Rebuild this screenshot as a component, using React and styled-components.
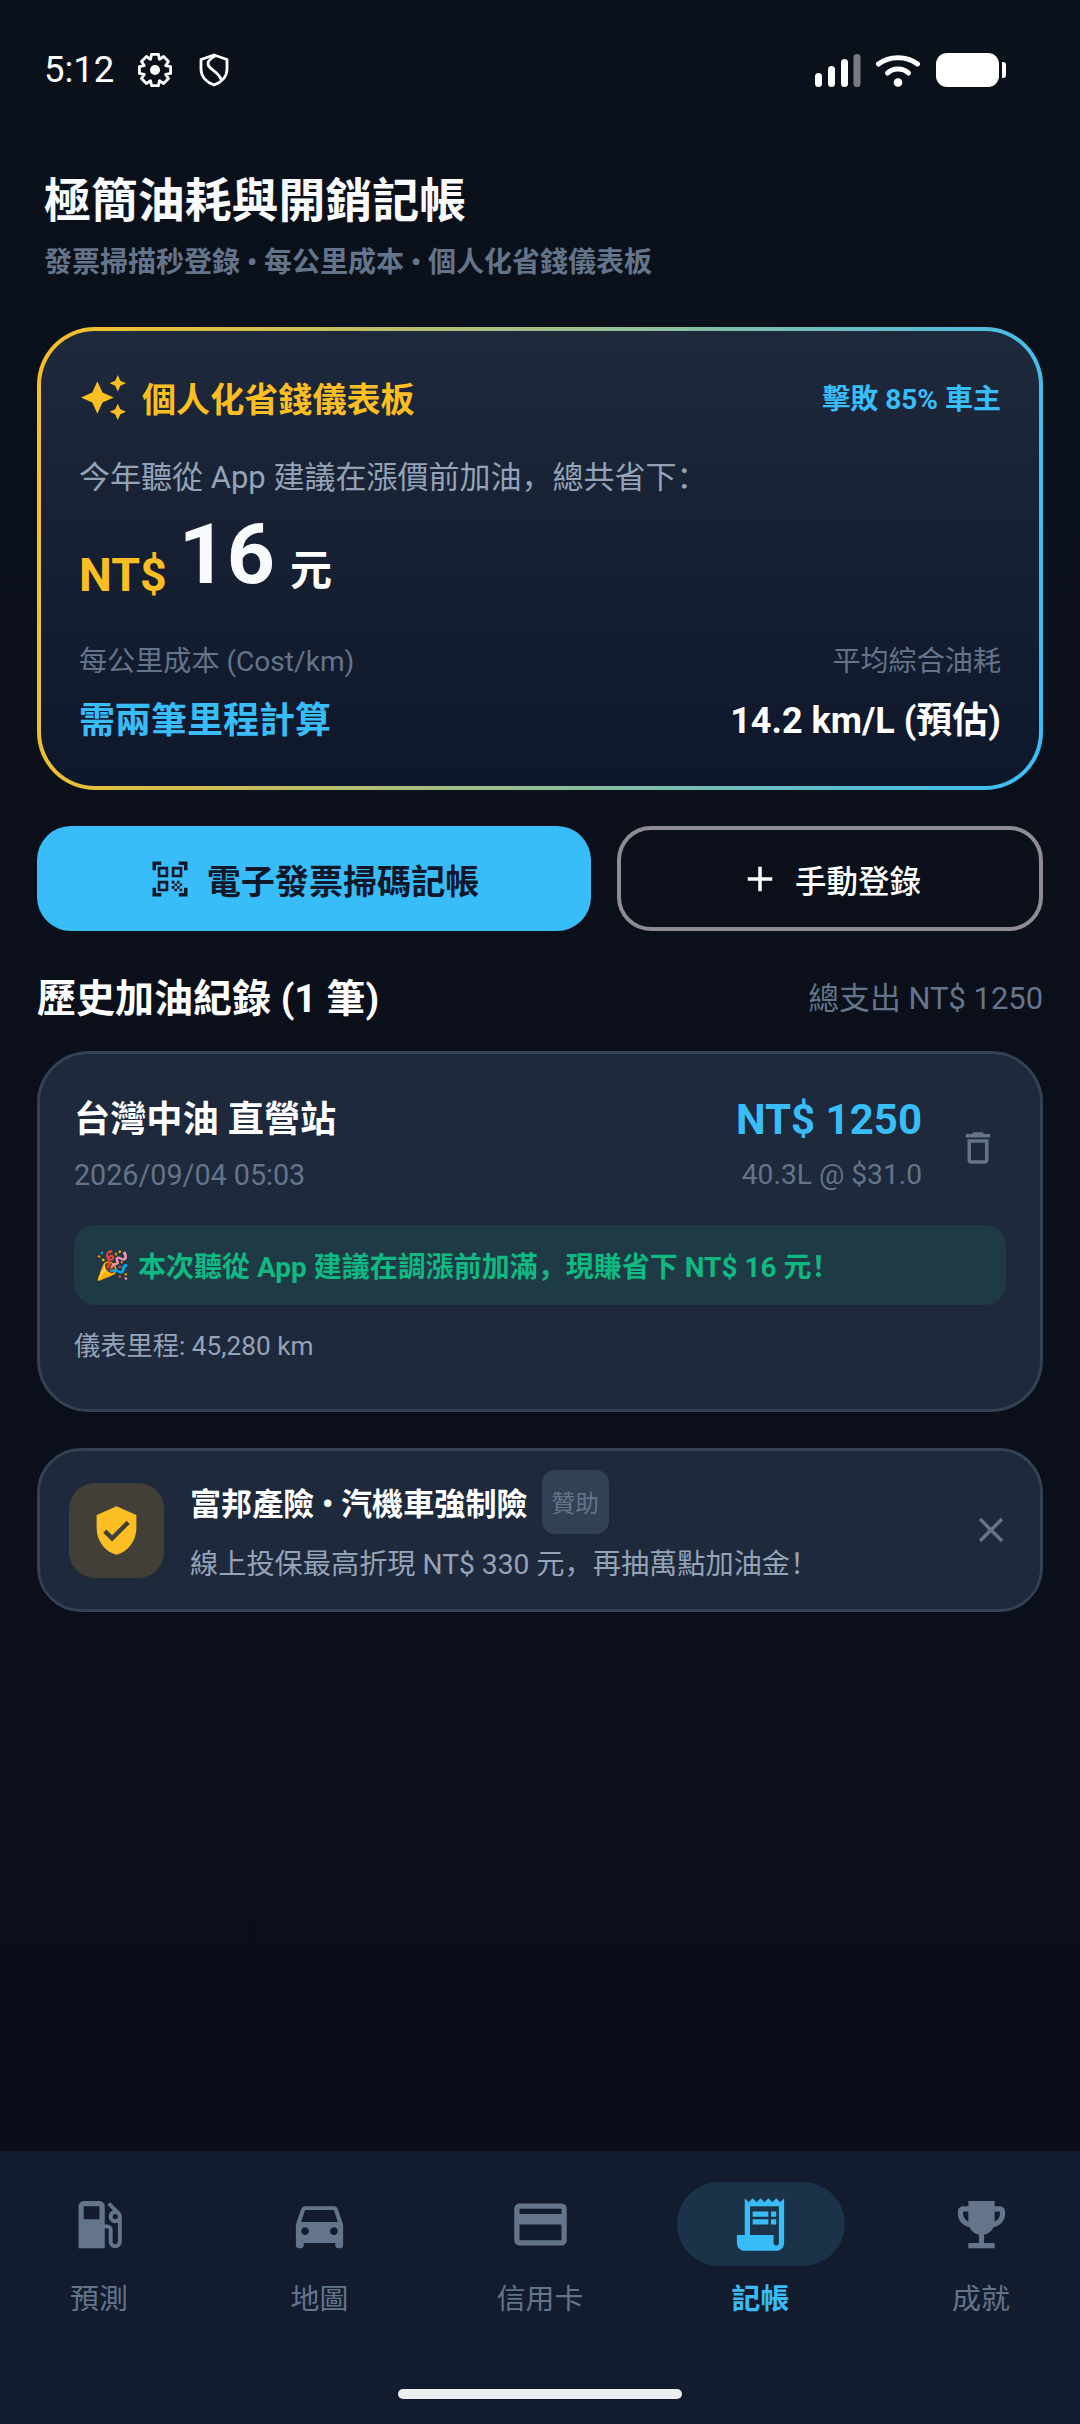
import React from 'react';
import styled, { createGlobalStyle } from 'styled-components';
import {
  MdAdd, MdAutoAwesome, MdClose, MdCreditCard, MdDeleteOutline, MdDirectionsCar,
  MdEmojiEvents, MdQrCodeScanner, MdReceiptLong, MdVerifiedUser,
} from 'react-icons/md';

const Global = createGlobalStyle`
  html, body { margin: 0; padding: 0; background: #0b1019; }
  * { box-sizing: border-box; }
  body { font-family: Roboto, "Noto Sans CJK SC", "Noto Sans CJK TC", sans-serif; }
`;

const Screen = styled.div`
  width: 1080px;
  height: 2424px;
  display: flex;
  flex-direction: column;
  background: linear-gradient(#0b111b, #0a0e18);
  color: #fff;
  overflow: hidden;
`;
const StatusBar = styled.div`
  height: 140px;
  flex: none;
  display: flex;
  align-items: center;
  padding: 0 81px 0 44px;
`;
const Time = styled.span`
  font-size: 36.5px;
  line-height: 1;
  width: 94px;
`;
const StatusRight = styled.div`
  margin-left: auto;
  display: flex;
  align-items: center;
`;
const Battery = styled.span`
  display: block;
  width: 63px;
  height: 34px;
  margin-left: 16px;
  border-radius: 11px;
  background: #fff;
  position: relative;
  &::after {
    content: "";
    position: absolute;
    right: -7px;
    top: 9px;
    width: 4px;
    height: 16px;
    border-radius: 0 3px 3px 0;
    background: #fff;
  }
`;
const Header = styled.header`
  padding: 31px 44px 0;
  height: 187px;
  flex: none;
`;
const Title = styled.h1`
  margin: 0;
  font-size: 46.9px;
  line-height: 60px;
  font-weight: 700;
  color: #f8fafc;
`;
const Sub = styled.p`
  margin: 12px 0 0;
  font-size: 28px;
  line-height: 40px;
  font-weight: 700;
  color: #64748b;
`;
const Main = styled.main`
  flex: 1;
  padding: 0 37px;
  display: flex;
  flex-direction: column;
`;
const Dash = styled.section`
  height: 463px;
  border: 4px solid transparent;
  border-radius: 58px;
  background:
    linear-gradient(#1e293b, #0f172a) padding-box,
    linear-gradient(100deg, #fbbf24, #38bdf8) border-box;
  padding: 30px 38px 0;
`;
const SpaceRow = styled.div`
  display: flex;
  justify-content: space-between;
  align-items: center;
`;
const DashHead = styled(SpaceRow)`
  height: 52px;
  margin-top: 10px;
`;
const DashTitle = styled.div`
  display: flex;
  align-items: center;
  gap: 14px;
  color: #fbbf24;
  font-size: 34.1px;
  font-weight: 700;
`;
const Beat = styled.span`
  color: #38bdf8;
  font-size: 28px;
  font-weight: 700;
`;
const Lead = styled.p`
  margin: 33px 0 0;
  font-size: 31px;
  line-height: 44px;
  color: #94a3b8;
`;
const SavedRow = styled.div`
  display: flex;
  align-items: flex-end;
  height: 100px;
  margin-top: 5px;
`;
const Currency = styled.span`
  color: #fbbf24;
  font-size: 46.5px;
  font-weight: 700;
  line-height: 56px;
  margin-bottom: 2px;
`;
const Amount = styled.span`
  font-size: 84px;
  line-height: 100px;
  font-weight: 700;
  margin: 0 15px 0 12px;
  color: #f8fafc;
`;
const Unit = styled.span`
  font-size: 42px;
  line-height: 56px;
  font-weight: 700;
  margin-bottom: 6px;
`;
const StatLabels = styled(SpaceRow)`
  margin-top: 37px;
  font-size: 28.1px;
  line-height: 40px;
  color: #64748b;
`;
const StatValues = styled(SpaceRow)`
  margin-top: 14px;
  font-size: 36px;
  line-height: 50px;
  font-weight: 700;
`;
const CostNote = styled.span`
  color: #38bdf8;
`;
const Actions = styled.div`
  display: flex;
  gap: 26px;
  margin-top: 36px;
`;
const Btn = styled.button`
  height: 105px;
  border-radius: 34px;
  display: flex;
  align-items: center;
  justify-content: center;
  font-family: inherit;
  padding: 0;
  border: ${p => (p.$primary ? 'none' : '4px solid #8f8b93')};
  background: ${p => (p.$primary ? '#38bdf8' : 'transparent')};
  color: ${p => (p.$primary ? '#0f172a' : '#fff')};
  flex: ${p => (p.$primary ? '0 0 554px' : '1')};
  gap: ${p => (p.$primary ? '16px' : '14px')};
  font-size: ${p => (p.$primary ? '34.1px' : '31.5px')};
  font-weight: ${p => (p.$primary ? 700 : 500)};
`;
const SectionHead = styled(SpaceRow)`
  margin-top: 37px;
  height: 54px;
`;
const SectionTitle = styled.h2`
  margin: 0;
  font-size: 39px;
  font-weight: 700;
`;
const Total = styled.span`
  font-size: 30.9px;
  color: #64748b;
`;
const Panel = styled.section`
  background: #1e293b;
  border: 3px solid #334155;
`;
const Record = styled(Panel)`
  margin-top: 29px;
  height: 361px;
  border-radius: 52px;
  padding: 41px 34px 0;
`;
const RecordTop = styled.div`
  display: flex;
  align-items: center;
  justify-content: space-between;
`;
const RecordMain = styled.div`
  flex: 1;
  display: grid;
  grid-template-columns: 1fr auto;
  row-gap: 10px;
  align-items: center;
`;
const Station = styled.div`
  font-size: 36.2px;
  line-height: 50px;
  font-weight: 700;
`;
const Price = styled.div`
  font-size: 42px;
  line-height: 50px;
  font-weight: 700;
  color: #38bdf8;
  text-align: right;
`;
const Meta = styled.div`
  font-size: ${p => (p.$right ? '28.2px' : '28.7px')};
  line-height: 40px;
  color: #64748b;
  text-align: ${p => (p.$right ? 'right' : 'left')};
`;
const Trash = styled.span`
  display: flex;
  width: 42px;
  margin: 5px 7px 0 35px;
  color: #64748b;
`;
const Savings = styled.div`
  margin-top: 30px;
  height: 80px;
  border-radius: 21px;
  background: #1e3a45;
  color: #10b981;
  display: flex;
  align-items: center;
  padding: 0 21px;
  gap: 8px;
  font-size: 28px;
  font-weight: 700;
`;
const Odometer = styled.div`
  margin-top: 23px;
  font-size: 26.25px;
  line-height: 36px;
  color: #94a3b8;
`;
const Promo = styled(Panel)`
  margin-top: 36px;
  height: 164px;
  border-radius: 44px;
  display: flex;
  align-items: center;
  padding: 0 28px 0 29px;
`;
const PromoIcon = styled.div`
  width: 95px;
  height: 95px;
  flex: none;
  border-radius: 26px;
  background: #413f37;
  color: #fbbf24;
  display: flex;
  align-items: center;
  justify-content: center;
`;
const PromoBody = styled.div`
  flex: 1;
  margin-left: 26px;
  padding-bottom: 6px;
`;
const PromoTitle = styled.div`
  display: flex;
  align-items: center;
  gap: 14px;
  font-size: 31.1px;
  font-weight: 700;
  height: 64px;
`;
const Badge = styled.span`
  height: 64px;
  padding: 0 10px;
  border-radius: 13px;
  background: #334155;
  color: #64748b;
  font-size: 23.6px;
  font-weight: 400;
  display: flex;
  align-items: center;
`;
const PromoText = styled.div`
  margin-top: 11px;
  font-size: 28.2px;
  line-height: 40px;
  color: #94a3b8;
`;
const CloseBtn = styled.span`
  display: flex;
  color: #64748b;
`;
const Nav = styled.nav`
  height: 273px;
  flex: none;
  background: #131c2e;
  padding: 31px 15px 0;
  display: flex;
  flex-direction: column;
`;
const NavRow = styled.div`
  display: flex;
  justify-content: space-between;
`;
const NavItem = styled.div`
  width: 168px;
  display: flex;
  flex-direction: column;
  align-items: center;
  color: ${p => (p.$active ? '#38bdf8' : '#64748b')};
`;
const NavPill = styled.div`
  width: 168px;
  height: 84px;
  border-radius: 42px;
  display: flex;
  align-items: center;
  justify-content: center;
  background: ${p => (p.$active ? '#1a3349' : 'transparent')};
`;
const NavLabel = styled.span`
  margin-top: 13px;
  font-size: 28.9px;
  line-height: 40px;
  font-weight: ${p => (p.$active ? 700 : 400)};
`;
const HomeBar = styled.div`
  width: 284px;
  height: 10px;
  border-radius: 5px;
  background: #eceef0;
  margin: 70px auto 0;
`;

const gearPath = (() => {
  const c = 17, outer = 16, inner = 11.6, teeth = 8;
  const pts = [];
  for (let i = 0; i < teeth; i++) {
    const a = (i * 2 * Math.PI) / teeth - Math.PI / 2;
    [[-0.39, inner], [-0.22, outer], [0.22, outer], [0.39, inner]].forEach(([d, r]) => {
      pts.push(`${(c + r * Math.cos(a + d)).toFixed(2)} ${(c + r * Math.sin(a + d)).toFixed(2)}`);
    });
  }
  return `M${pts.join('L')}Z`;
})();

const Gear = () => (
  <svg width="34" height="34" viewBox="0 0 34 34" style={{ flex: 'none' }}>
    <path d={gearPath} fill="none" stroke="#fff" strokeWidth="2.8" strokeLinejoin="round" />
    <circle cx="17" cy="17" r="5" fill="#fff" />
  </svg>
);
const ShieldS = () => (
  <svg width="32" height="34" viewBox="0 0 32 34" style={{ flex: 'none', marginLeft: 26 }}>
    <path d="M16 2 L29 6.5 V16 C29 24 23 29.5 16 32 C9 29.5 3 24 3 16 V6.5 Z" fill="none" stroke="#fff" strokeWidth="2.8" strokeLinejoin="round" />
    <path d="M17 3 C11 6 8 10 11.5 14 C14.5 17.5 21 20 23.5 27" fill="none" stroke="#fff" strokeWidth="2.8" />
  </svg>
);
const Signal = () => (
  <svg width="46" height="33" viewBox="0 0 46 33">
    <rect x="0" y="19" width="7" height="14" rx="3.5" fill="#fff" />
    <rect x="13" y="12" width="7" height="21" rx="3.5" fill="#fff" />
    <rect x="26" y="5" width="7" height="28" rx="3.5" fill="#fff" />
    <rect x="38.5" y="0" width="7" height="33" rx="3.5" fill="#7b7b80" />
  </svg>
);
const Wifi = () => (
  <svg width="44" height="33" viewBox="0 0 44 33" style={{ marginLeft: 15 }}>
    <path d="M2.5 10 C13 1.5 31 1.5 41.5 10" fill="none" stroke="#fff" strokeWidth="5" strokeLinecap="round" />
    <path d="M11.5 19 C17 13.5 27 13.5 32.5 19" fill="none" stroke="#fff" strokeWidth="5" strokeLinecap="round" />
    <circle cx="22" cy="28.5" r="4.3" fill="#fff" />
  </svg>
);
const GasIcon = () => (
  <svg width="63" height="63" viewBox="0 0 24 24" fill="currentColor">
    <path fillRule="evenodd" d="M4 21V5q0-.825.588-1.413T6 3h6q.825 0 1.413.587T14 5v7h1q.825 0 1.413.588T17 14v4.5q0 .425.288.713T18 19.5q.425 0 .713-.287T19 18.5v-7.2q-.225.125-.475.163T18 11.5q-1.05 0-1.775-.725T15.5 9q0-.8.438-1.437T17.1 6.6L15 4.5l1-1 3.7 3.6q.375.375.588.875T20.5 9v9.5q0 1.05-.725 1.775T18 21q-1.05 0-1.775-.725T15.5 18.5v-5H14V21H4ZM6 10h6V5H6v5Zm12 0q.425 0 .713-.288T19 9q0-.425-.287-.713T18 8q-.425 0-.713.287T17 9q0 .425.287.713T18 10Z" />
  </svg>
);

const tabs = [
  { label: '預測', icon: <GasIcon /> },
  { label: '地圖', icon: <MdDirectionsCar size={63} /> },
  { label: '信用卡', icon: <MdCreditCard size={63} /> },
  { label: '記帳', icon: <MdReceiptLong size={63} />, active: true },
  { label: '成就', icon: <MdEmojiEvents size={63} /> },
];

export default function App() {
  return (
    <Screen>
      <Global />
      <StatusBar>
        <Time>5:12</Time>
        <Gear />
        <ShieldS />
        <StatusRight>
          <Signal />
          <Wifi />
          <Battery />
        </StatusRight>
      </StatusBar>
      <Header>
        <Title>極簡油耗與開銷記帳</Title>
        <Sub>發票掃描秒登錄 • 每公里成本 • 個人化省錢儀表板</Sub>
      </Header>
      <Main>
        <Dash>
          <DashHead>
            <DashTitle><MdAutoAwesome size={49} />個人化省錢儀表板</DashTitle>
            <Beat>擊敗 85% 車主</Beat>
          </DashHead>
          <Lead>今年聽從 App 建議在漲價前加油，總共省下：</Lead>
          <SavedRow>
            <Currency>NT$</Currency>
            <Amount>16</Amount>
            <Unit>元</Unit>
          </SavedRow>
          <StatLabels>
            <span>每公里成本 (Cost/km)</span>
            <span>平均綜合油耗</span>
          </StatLabels>
          <StatValues>
            <CostNote>需兩筆里程計算</CostNote>
            <span>14.2 km/L (預估)</span>
          </StatValues>
        </Dash>
        <Actions>
          <Btn $primary><MdQrCodeScanner size={42} />電子發票掃碼記帳</Btn>
          <Btn><MdAdd size={42} />手動登錄</Btn>
        </Actions>
        <SectionHead>
          <SectionTitle>歷史加油紀錄 (1 筆)</SectionTitle>
          <Total>總支出 NT$ 1250</Total>
        </SectionHead>
        <Record>
          <RecordTop>
            <RecordMain>
              <Station>台灣中油 直營站</Station>
              <Price>NT$ 1250</Price>
              <Meta>2026/09/04 05:03</Meta>
              <Meta $right>40.3L @ $31.0</Meta>
            </RecordMain>
            <Trash><MdDeleteOutline size={42} /></Trash>
          </RecordTop>
          <Savings><span>🎉</span><span>本次聽從 App 建議在調漲前加滿，現賺省下 NT$ 16 元！</span></Savings>
          <Odometer>儀表里程: 45,280 km</Odometer>
        </Record>
        <Promo>
          <PromoIcon><MdVerifiedUser size={53} /></PromoIcon>
          <PromoBody>
            <PromoTitle>富邦產險 • 汽機車強制險<Badge>贊助</Badge></PromoTitle>
            <PromoText>線上投保最高折現 NT$ 330 元，再抽萬點加油金！</PromoText>
          </PromoBody>
          <CloseBtn><MdClose size={42} /></CloseBtn>
        </Promo>
      </Main>
      <Nav>
        <NavRow>
          {tabs.map(t => (
            <NavItem key={t.label} $active={t.active}>
              <NavPill $active={t.active}>{t.icon}</NavPill>
              <NavLabel $active={t.active}>{t.label}</NavLabel>
            </NavItem>
          ))}
        </NavRow>
        <HomeBar />
      </Nav>
    </Screen>
  );
}
